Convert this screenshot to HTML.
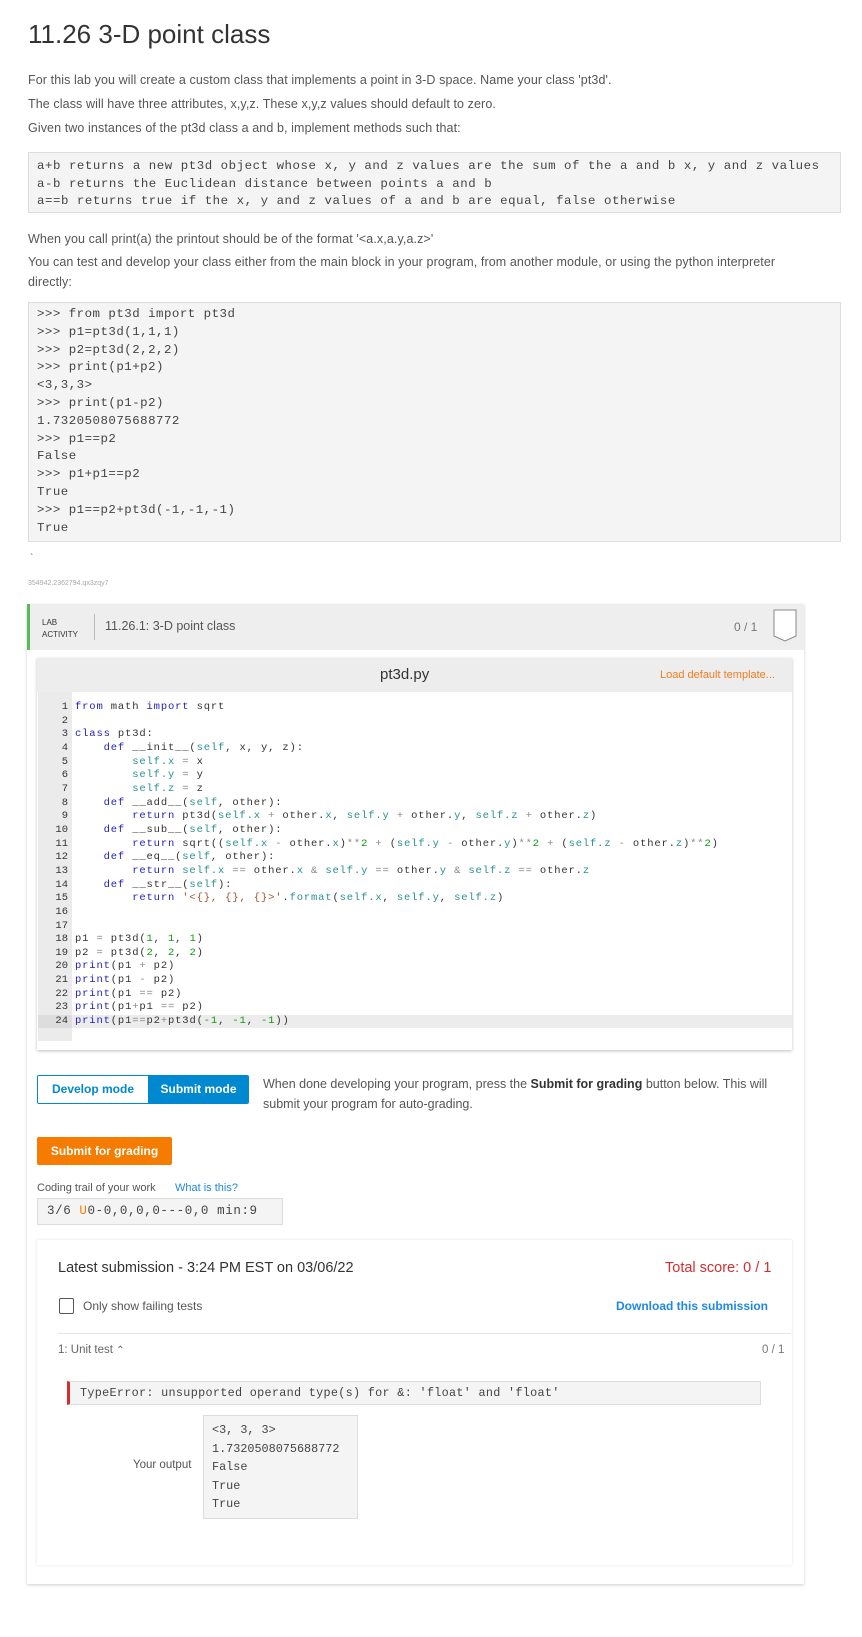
<!DOCTYPE html>
<html><head><meta charset="utf-8"><style>
*{box-sizing:border-box;margin:0;padding:0}
body{width:862px;height:1637px;background:#fff;font-family:"Liberation Sans",sans-serif;color:#555;position:relative;overflow:hidden}
.a{position:absolute}
p{position:absolute;left:28px;font-size:12.5px;color:#555;white-space:nowrap;letter-spacing:0.1px}
pre{font-family:"Liberation Mono",monospace}
.box{position:absolute;background:#f4f4f4;border:1px solid #ddd}
.k{color:#2323b8}.s{color:#2a9090}.n{color:#119911}.st{color:#a0522d}.o{color:#888}
</style></head><body>
<div class="a" style="left:28px;top:19px;font-size:26px;color:#333;">11.26 3-D point class</div>
<p style="top:73px">For this lab you will create a custom class that implements a point in 3-D space. Name your class 'pt3d'.</p>
<p style="top:97px">The class will have three attributes, x,y,z. These x,y,z values should default to zero.</p>
<p style="top:121px">Given two instances of the pt3d class a and b, implement methods such that:</p>
<div class="box" style="left:28px;top:152px;width:813px;height:61px;"><pre style="position:absolute;left:8px;top:5px;font-size:12.4px;line-height:17.5px;color:#444;letter-spacing:0.55px">a+b returns a new pt3d object whose x, y and z values are the sum of the a and b x, y and z values
a-b returns the Euclidean distance between points a and b
a==b returns true if the x, y and z values of a and b are equal, false otherwise</pre></div>
<p style="top:232px">When you call print(a) the printout should be of the format '&lt;a.x,a.y,a.z&gt;'</p>
<p style="top:255px">You can test and develop your class either from the main block in your program, from another module, or using the python interpreter</p>
<p style="top:275px">directly:</p>
<div class="box" style="left:28px;top:302px;width:813px;height:240px;"><pre style="position:absolute;left:8px;top:3px;font-size:12.4px;line-height:17.8px;color:#444;letter-spacing:0.5px">&gt;&gt;&gt; from pt3d import pt3d
&gt;&gt;&gt; p1=pt3d(1,1,1)
&gt;&gt;&gt; p2=pt3d(2,2,2)
&gt;&gt;&gt; print(p1+p2)
&lt;3,3,3&gt;
&gt;&gt;&gt; print(p1-p2)
1.7320508075688772
&gt;&gt;&gt; p1==p2
False
&gt;&gt;&gt; p1+p1==p2
True
&gt;&gt;&gt; p1==p2+pt3d(-1,-1,-1)
True</pre></div>
<div class="a" style="left:30px;top:553px;font-size:10px;color:#555">`</div>
<div class="a" style="left:28px;top:580px;font-size:7px;color:#aaa">354942.2362794.qx3zqy7</div>

<div class="a" style="left:27px;top:604px;width:777px;height:980px;background:#fff;box-shadow:0 1px 3px rgba(0,0,0,.2)"></div>
<div class="a" style="left:27px;top:604px;width:777px;height:46px;background:#eee;border-left:3px solid #5cb85c"></div>
<div class="a" style="left:42px;top:617px;font-size:8px;line-height:12px;color:#333">LAB<br>ACTIVITY</div>
<div class="a" style="left:94px;top:614px;width:1px;height:26px;background:#bbb"></div>
<div class="a" style="left:105px;top:619px;font-size:12.5px;color:#555">11.26.1: 3-D point class</div>
<div class="a" style="left:734px;top:620px;font-size:12px;color:#777">0 / 1</div>
<svg class="a" style="left:770px;top:609px" width="30" height="36"><path d="M4 1H26V27L15 32L4 27Z" fill="#fff" stroke="#888" stroke-width="1"/></svg>

<div class="a" style="left:37px;top:658px;width:755px;height:392px;background:#fff;box-shadow:0 1px 3px rgba(0,0,0,.25)"></div>
<div class="a" style="left:37px;top:658px;width:755px;height:34px;background:#ededed"></div>
<div class="a" style="left:380px;top:666px;font-size:15px;color:#333">pt3d.py</div>
<div class="a" style="left:660px;top:669px;font-size:11px;color:#f47c20">Load default template...</div>
<div class="a" style="left:38px;top:692px;width:34px;height:349px;background:#ebebeb"></div>
<div class="a" style="left:72px;top:1015px;width:720px;height:13px;background:#ececec"></div>
<div class="a" style="left:38px;top:1015px;width:34px;height:13px;background:#ddd"></div>
<pre class="a" style="left:38px;top:701px;width:30px;text-align:right;font-size:10.5px;line-height:13.65px;color:#333">1
2
3
4
5
6
7
8
9
10
11
12
13
14
15
16
17
18
19
20
21
22
23
24</pre>
<pre class="a" style="left:75px;top:701px;font-size:10.5px;line-height:13.65px;color:#333;letter-spacing:0.85px"><span class="k">from</span> math <span class="k">import</span> sqrt

<span class="k">class</span> pt3d:
    <span class="k">def</span> __init__(<span class="s">self</span>, x, y, z):
        <span class="s">self.x</span> <span class="o">=</span> x
        <span class="s">self.y</span> <span class="o">=</span> y
        <span class="s">self.z</span> <span class="o">=</span> z
    <span class="k">def</span> __add__(<span class="s">self</span>, other):
        <span class="k">return</span> pt3d(<span class="s">self.x</span> <span class="o">+</span> other.<span class="s">x</span>, <span class="s">self.y</span> <span class="o">+</span> other.<span class="s">y</span>, <span class="s">self.z</span> <span class="o">+</span> other.<span class="s">z</span>)
    <span class="k">def</span> __sub__(<span class="s">self</span>, other):
        <span class="k">return</span> sqrt((<span class="s">self.x</span> <span class="o">-</span> other.<span class="s">x</span>)<span class="o">**</span><span class="n">2</span> <span class="o">+</span> (<span class="s">self.y</span> <span class="o">-</span> other.<span class="s">y</span>)<span class="o">**</span><span class="n">2</span> <span class="o">+</span> (<span class="s">self.z</span> <span class="o">-</span> other.<span class="s">z</span>)<span class="o">**</span><span class="n">2</span>)
    <span class="k">def</span> __eq__(<span class="s">self</span>, other):
        <span class="k">return</span> <span class="s">self.x</span> <span class="o">==</span> other.<span class="s">x</span> <span class="o">&amp;</span> <span class="s">self.y</span> <span class="o">==</span> other.<span class="s">y</span> <span class="o">&amp;</span> <span class="s">self.z</span> <span class="o">==</span> other.<span class="s">z</span>
    <span class="k">def</span> __str__(<span class="s">self</span>):
        <span class="k">return</span> <span class="st">'&lt;{}, {}, {}&gt;'</span>.<span class="s">format</span>(<span class="s">self.x</span>, <span class="s">self.y</span>, <span class="s">self.z</span>)


p1 <span class="o">=</span> pt3d(<span class="n">1</span>, <span class="n">1</span>, <span class="n">1</span>)
p2 <span class="o">=</span> pt3d(<span class="n">2</span>, <span class="n">2</span>, <span class="n">2</span>)
<span class="k">print</span>(p1 <span class="o">+</span> p2)
<span class="k">print</span>(p1 <span class="o">-</span> p2)
<span class="k">print</span>(p1 <span class="o">==</span> p2)
<span class="k">print</span>(p1<span class="o">+</span>p1 <span class="o">==</span> p2)
<span class="k">print</span>(p1<span class="o">==</span>p2<span class="o">+</span>pt3d(<span class="n">-1</span>, <span class="n">-1</span>, <span class="n">-1</span>))</pre>

<div class="a" style="left:37px;top:1075px;width:212px;height:29px;border:1px solid #0088d1;border-radius:2px;overflow:hidden;font-weight:bold;font-size:12px">
<div class="a" style="left:0;top:0;width:110px;height:27px;background:#fff;color:#0088d1;text-align:center;line-height:27px">Develop mode</div>
<div class="a" style="left:110px;top:0;width:101px;height:27px;background:#0088d1;color:#fff;text-align:center;line-height:27px">Submit mode</div></div>
<div class="a" style="left:263px;top:1074px;font-size:12.5px;line-height:20px;color:#555">When done developing your program, press the <b style="color:#333">Submit for grading</b> button below. This will<br>submit your program for auto-grading.</div>
<div class="a" style="left:37px;top:1137px;width:135px;height:28px;background:#f57c00;color:#fff;font-weight:bold;font-size:12px;line-height:28px;text-align:center;border-radius:2px">Submit for grading</div>
<div class="a" style="left:37px;top:1182px;font-size:11px;color:#555">Coding trail of your work</div>
<div class="a" style="left:175px;top:1182px;font-size:11px;color:#1e88e5">What is this?</div>
<div class="box" style="left:37px;top:1198px;width:246px;height:27px;"><pre style="position:absolute;left:9px;top:5px;font-size:12.5px;color:#444;letter-spacing:0.6px">3/6 <span style="color:#f57c00">U</span>0-0,0,0,0---0,0 min:9</pre></div>

<div class="a" style="left:37px;top:1240px;width:755px;height:325px;background:#fff;box-shadow:0 0 3px rgba(0,0,0,.12)"></div>
<div class="a" style="left:58px;top:1260px;font-size:14.5px;color:#333">Latest submission - 3:24 PM EST on 03/06/22</div>
<div class="a" style="left:665px;top:1260px;font-size:14.5px;color:#d32f2f">Total score: 0 / 1</div>
<div class="a" style="left:59px;top:1298px;width:15px;height:16px;border:1px solid #555;border-radius:2px"></div>
<div class="a" style="left:83px;top:1299px;font-size:12px;color:#555">Only show failing tests</div>
<div class="a" style="left:616px;top:1299px;font-size:12px;font-weight:bold;color:#1e88e5">Download this submission</div>
<div class="a" style="left:58px;top:1333px;width:733px;height:1px;background:#e5e5e5"></div>
<div class="a" style="left:58px;top:1344px;font-size:11.5px;color:#666">1: Unit test <span style="font-size:10px">&#8963;</span></div>
<div class="a" style="left:762px;top:1344px;font-size:11.5px;color:#777">0 / 1</div>
<div class="box" style="left:67px;top:1381px;width:694px;height:24px;border-left:3px solid #d32f2f"><pre style="position:absolute;left:10px;top:4px;font-size:11.8px;color:#444;letter-spacing:0.3px">TypeError: unsupported operand type(s) for &amp;: 'float' and 'float'</pre></div>
<div class="a" style="left:133px;top:1459px;font-size:11.5px;color:#555">Your output</div>
<div class="box" style="left:203px;top:1415px;width:155px;height:104px;"><pre style="position:absolute;left:8px;top:5px;font-size:11.8px;line-height:18.6px;color:#444">&lt;3, 3, 3&gt;
1.7320508075688772
False
True
True</pre></div>
</body></html>
